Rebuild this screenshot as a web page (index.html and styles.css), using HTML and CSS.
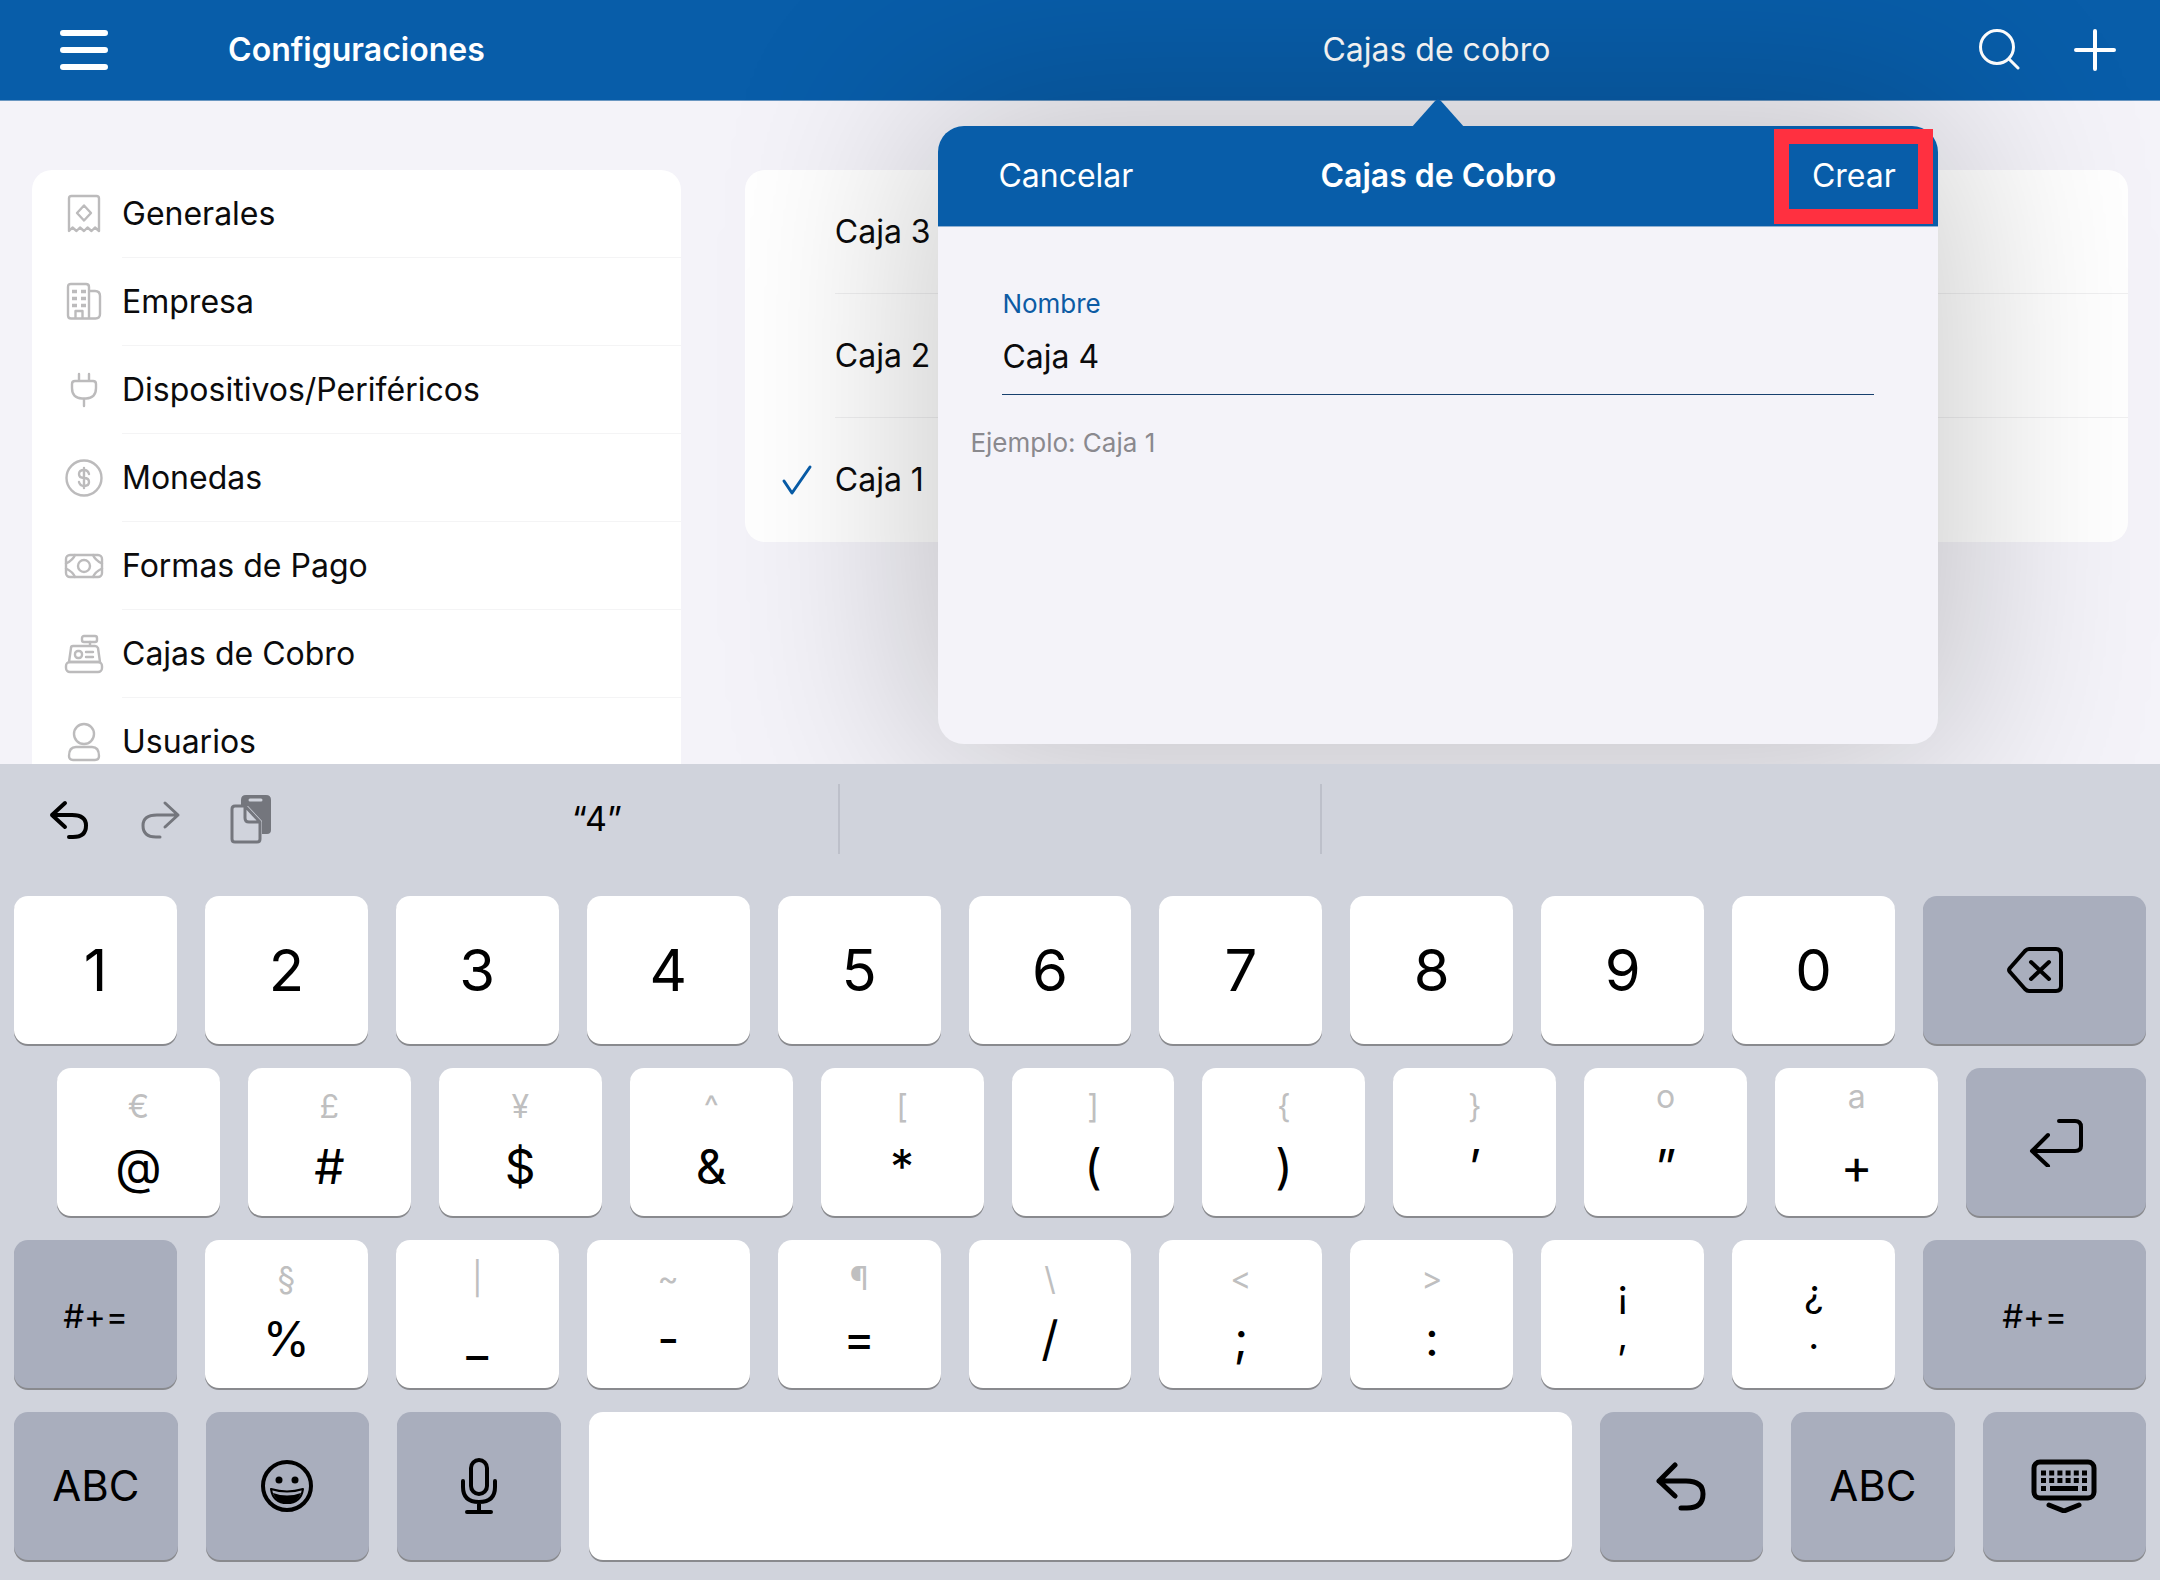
FILE: index.html
```html
<!DOCTYPE html>
<html lang="es">
<head>
<meta charset="utf-8">
<meta name="viewport" content="width=device-width, initial-scale=1">
<title>Configuraciones</title>
<link rel="stylesheet" href="styles.css">
</head>
<body>
<main class="app">
  <section class="sidebar">
    <header class="bar">
      <button class="bar-button menu-button" type="button" aria-label="Menú">
        <svg width="48" height="42" viewBox="0 0 48 42"><path d="M3 4h42M3 21h42M3 38h42" stroke-width="6"/></svg>
      </button>
      <h1 class="bar-title strong">Configuraciones</h1>
    </header>
    <nav class="pane">
      <ul class="card">
        <li><a class="nav-item" href="#generales">
          <svg class="nav-icon" viewBox="0 0 40 40"><path d="M5 37V4.500Q5 2 7.500 2h25Q35 2 35 4.500V37l-4-3.500-3.500 3.500-4-3.500-3.500 3.500-4-3.500-3.500 3.500-4-3.500zM20 11.500l7 7.500-7 7.500-7-7.500z"/></svg>
          <span>Generales</span></a></li>
        <li><a class="nav-item" href="#empresa">
          <svg class="nav-icon" viewBox="0 0 40 40"><path d="M7 2h15q3 0 3 3v31.500H7q-3 0-3-3V5q0-3 3-3zM25 9h6q5 0 5 5v18q0 4.500-4.500 4.500H25M11.500 36.500V29h7v7.500"/><path d="M8 9.500h5m4 0h5M8 16.500h5m4 0h5M8 23.500h5m4 0h5" stroke-width="3.500" stroke-linecap="butt"/></svg>
          <span>Empresa</span></a></li>
        <li><a class="nav-item" href="#dispositivos">
          <svg class="nav-icon" viewBox="0 0 40 40"><path d="M15 4v7M25 4v7M11 11h18q3 0 3 3v4q0 10-10 10.500h-4Q8 28 8 18v-4q0-3 3-3zM20 29v7"/></svg>
          <span>Dispositivos/Periféricos</span></a></li>
        <li><a class="nav-item" href="#monedas">
          <svg class="nav-icon" viewBox="0 0 40 40"><circle cx="20" cy="20" r="17.500"/><path d="M20 10v20M25 16q-1-4-5-4-5 0-5 4t5 4 5 4-5 4q-4 0-5-4"/></svg>
          <span>Monedas</span></a></li>
        <li><a class="nav-item" href="#pagos">
          <svg class="nav-icon" viewBox="0 0 40 40"><rect x="2" y="9" width="36" height="22" rx="4"/><circle cx="20" cy="20" r="6"/><path d="M11 9q-2 5-9 8.500M29 9q2 5 9 8.500M11 31q-2-5-9-8.500M29 31q2-5 9-8.500"/></svg>
          <span>Formas de Pago</span></a></li>
        <li><a class="nav-item" href="#cajas">
          <svg class="nav-icon" viewBox="0 0 40 40"><rect x="18" y="2" width="15" height="6" rx="2"/><path d="M26 8v4M9 12h22q2 0 3 2l2 14H5L7 14q0-2 2-2z"/><rect x="2" y="28" width="36" height="10" rx="4"/><rect x="11" y="17" width="7" height="7" rx="3"/><path d="M22 18h7M22 23h7"/></svg>
          <span>Cajas de Cobro</span></a></li>
        <li><a class="nav-item" href="#usuarios">
          <svg class="nav-icon" viewBox="0 0 40 40"><circle cx="20" cy="12" r="10"/><path d="M12 25h16q7 0 7 9 0 4-4 4H9q-4 0-4-4 0-9 7-9z"/></svg>
          <span>Usuarios</span></a></li>
      </ul>
    </nav>
  </section>

  <section class="detail">
    <header class="bar">
      <h2 class="bar-title">Cajas de cobro</h2>
      <div class="bar-actions">
        <button class="bar-button" type="button" aria-label="Buscar">
          <svg width="42" height="42" viewBox="0 0 42 42"><circle cx="19" cy="18" r="16.500" stroke-width="3"/><path d="M31 30l9 9" stroke-width="3"/></svg>
        </button>
        <button class="bar-button" type="button" aria-label="Añadir">
          <svg width="42" height="42" viewBox="0 0 42 42"><path class="plus" d="M21 2v38M2 21h38"/></svg>
        </button>
      </div>
    </header>
    <div class="pane">
      <ul class="card">
        <li><button class="box-item" type="button"><span class="mark"></span><span class="box-name">Caja 3</span></button></li>
        <li><button class="box-item" type="button"><span class="mark"></span><span class="box-name">Caja 2</span></button></li>
        <li><button class="box-item" type="button"><span class="mark"><svg width="32" height="32" viewBox="0 0 32 32"><path d="M3 17l8 12L29 3"/></svg></span><span class="box-name">Caja 1</span></button></li>
      </ul>
    </div>

    <form class="popover">
      <svg class="arrow" width="54" height="30" viewBox="0 0 54 30"><path d="M0 30L24 3q3-3 6 0L54 30z"/></svg>
      <div class="popover-bar">
        <button class="popover-button cancel" type="button">Cancelar</button>
        <h3 class="bar-title strong">Cajas de Cobro</h3>
        <button class="popover-button create" type="button">Crear</button>
      </div>
      <div class="popover-body">
        <label class="field-label" for="nombre">Nombre</label>
        <input class="field-input" id="nombre" type="text" value="Caja 4">
        <p class="hint">Ejemplo: Caja 1</p>
      </div>
    </form>
  </section>
</main>

<section class="keyboard" aria-label="Teclado">
  <div class="suggestions">
    <div class="edit-tools">
      <button class="tool" type="button" aria-label="Deshacer"><svg width="42" height="42" viewBox="0 0 42 42"><path d="M17 5L4 17l13 12M4 17h20q14 0 14 10.500 0 11.500-13 11.500h-4"/></svg></button>
      <button class="tool dim" type="button" aria-label="Rehacer"><svg width="42" height="42" viewBox="0 0 42 42"><path d="M26 5l13 12-13 12M39 17H18Q4 17 4 27.500q0 11.500 13 11.500h4"/></svg></button>
      <button class="tool dim" type="button" aria-label="Pegar"><svg width="42" height="50" viewBox="0 0 42 50"><path class="solid" d="M16 1h20q5 0 5 5v30q0 4-4 4h-5V27L18 12h-7V6q0-5 5-5z"/><path class="gap" d="M20 6h11"/><path d="M5 12h10l15 16v17q0 3-3 3H5q-3 0-3-3V15q0-3 3-3zM15 12v12q0 4 4 4h11"/></svg></button>
    </div>
    <button class="suggestion" type="button">“4”</button>
    <button class="suggestion" type="button" aria-label="Sugerencia"></button>
    <button class="suggestion" type="button" aria-label="Sugerencia"></button>
  </div>

  <div class="keys">
    <div class="row">
      <button class="key digit" type="button">1</button>
      <button class="key digit" type="button">2</button>
      <button class="key digit" type="button">3</button>
      <button class="key digit" type="button">4</button>
      <button class="key digit" type="button">5</button>
      <button class="key digit" type="button">6</button>
      <button class="key digit" type="button">7</button>
      <button class="key digit" type="button">8</button>
      <button class="key digit" type="button">9</button>
      <button class="key digit" type="button">0</button>
      <button class="key dark wide" type="button" aria-label="Borrar"><svg width="56" height="50" viewBox="0 0 56 50"><path d="M22 4h27q5 0 5 6v31q0 5-5 5H22q-2 0-4-2L3 27q-2-2 0-4L18 6q2-2 4-2z"/><path d="M24 17l18 17M42 17L24 34"/></svg></button>
    </div>
    <div class="row indented">
      <button class="key dual" type="button"><span class="alt">€</span><span class="main">@</span></button>
      <button class="key dual" type="button"><span class="alt">£</span><span class="main">#</span></button>
      <button class="key dual" type="button"><span class="alt">¥</span><span class="main">$</span></button>
      <button class="key dual" type="button"><span class="alt">^</span><span class="main">&amp;</span></button>
      <button class="key dual" type="button"><span class="alt">[</span><span class="main">*</span></button>
      <button class="key dual" type="button"><span class="alt">]</span><span class="main">(</span></button>
      <button class="key dual" type="button"><span class="alt">{</span><span class="main">)</span></button>
      <button class="key dual" type="button"><span class="alt">}</span><span class="main">’</span></button>
      <button class="key dual raised" type="button"><span class="alt">o</span><span class="main">”</span></button>
      <button class="key dual raised" type="button"><span class="alt">a</span><span class="main">+</span></button>
      <button class="key dark enter" type="button" aria-label="Intro"><svg width="54" height="50" viewBox="0 0 54 50"><path d="M30 4h16q6 0 6 6v19q0 5-6 5H3M19 18L3 34l16 15"/></svg></button>
    </div>
    <div class="row">
      <button class="key dark symbols" type="button">#+=</button>
      <button class="key dual" type="button"><span class="alt">§</span><span class="main">%</span></button>
      <button class="key dual" type="button"><span class="alt">|</span><span class="main">_</span></button>
      <button class="key dual" type="button"><span class="alt">~</span><span class="main">-</span></button>
      <button class="key dual" type="button"><span class="alt">¶</span><span class="main">=</span></button>
      <button class="key dual" type="button"><span class="alt">\</span><span class="main">/</span></button>
      <button class="key dual" type="button"><span class="alt">&lt;</span><span class="main">;</span></button>
      <button class="key dual" type="button"><span class="alt">&gt;</span><span class="main">:</span></button>
      <button class="key pair" type="button"><span>¡</span><span>,</span></button>
      <button class="key pair" type="button"><span>¿</span><span>.</span></button>
      <button class="key dark wide symbols" type="button">#+=</button>
    </div>
    <div class="row">
      <button class="key dark letters" type="button">ABC</button>
      <button class="key dark" type="button" aria-label="Emoji"><svg width="52" height="52" viewBox="0 0 52 52"><circle cx="26" cy="26" r="24"/><circle class="fill" cx="18" cy="20" r="3.500"/><circle class="fill" cx="34" cy="20" r="3.500"/><path d="M10 29q16 5 32 0-2 14-16 14T10 29z" stroke-width="2"/><path class="fill" d="M12 33q14 5 28 0-3 10-14 10T12 33z"/></svg></button>
      <button class="key dark" type="button" aria-label="Dictado"><svg width="38" height="56" viewBox="0 0 38 56"><rect x="11" y="2" width="16" height="34" rx="8"/><path d="M3 23v6q0 15 16 15t16-15v-6M19 44v10M7 54h24"/></svg></button>
      <button class="key space" type="button" aria-label="Espacio"></button>
      <button class="key dark" type="button" aria-label="Deshacer"><svg class="bold" width="50" height="50" viewBox="0 0 50 50"><path d="M19 4L3 20l16 15M3 20h27q17 0 17 13 0 14-16 14h-6"/></svg></button>
      <button class="key dark letters" type="button">ABC</button>
      <button class="key dark" type="button" aria-label="Ocultar teclado"><svg class="bold" width="66" height="54" viewBox="0 0 66 54"><rect x="3" y="3" width="60" height="36" rx="6"/><path class="dots" d="M10 14h46M10 21.500h46"/><path class="flat" d="M10 29.500h5M19 29.500h28M51 29.500h5"/><path d="M18 46l15 6 15-6"/></svg></button>
    </div>
  </div>
</section>
</body>
</html>
```
FILE: styles.css
```css
:root {
  --blue: #085da9;
  --pane: #f4f3f9;
  --icon: #bcbbbc;
  --key-dark: #a9aebd;
}

* {
  box-sizing: border-box;
}

body {
  margin: 0;
  min-height: 100vh;
  height: 100vh;
  display: flex;
  flex-direction: column;
  font-family: Inter, "Liberation Sans", sans-serif;
  font-size: 32px;
  line-height: 44px;
  color: #0b0b0c;
  background: var(--pane);
}

button,
input {
  font: inherit;
  color: inherit;
  border: 0;
  padding: 0;
  background: none;
}

h1,
h2,
h3,
p,
ul {
  margin: 0;
  padding: 0;
  font-size: inherit;
  font-weight: 400;
}

ul {
  list-style: none;
}

svg {
  display: block;
  flex: none;
  fill: none;
  stroke: currentColor;
  stroke-width: 3;
  stroke-linecap: round;
  stroke-linejoin: round;
}

/* Split view */
.app {
  flex: 1;
  min-height: 0;
  display: grid;
  grid-template-columns: 33fr 67fr;
  overflow: hidden;
  position: relative;
}

.sidebar,
.detail {
  min-width: 0;
  min-height: 0;
}

.detail {
  position: relative;
}

.bar {
  height: 101px;
  display: grid;
  grid-template-columns: 1fr auto 1fr;
  align-items: center;
  padding: 0 60px;
  color: #fff;
  background: var(--blue);
  border-bottom: 1px solid #6a97c2;
}

.detail .bar {
  padding: 0 44px;
}

.bar-title {
  grid-column: 2;
}

.strong {
  font-weight: 600;
}

.menu-button {
  justify-self: start;
}

.bar-actions {
  grid-column: 3;
  justify-self: end;
  display: flex;
  gap: 54px;
}

.plus {
  stroke-width: 4;
}

.pane {
  padding: 69px 32px 0;
}

.card {
  background: #fff;
  border-radius: 20px;
  overflow: hidden;
}

.nav-item {
  display: flex;
  align-items: center;
  gap: 18px;
  padding-left: 32px;
  color: inherit;
  text-decoration: none;
}

.nav-icon {
  width: 40px;
  height: 40px;
  color: var(--icon);
  stroke-width: 2.4;
}

.nav-item span {
  flex: 1;
  padding: 22px 0 21px;
  border-bottom: 1px solid #f4f4f5;
}

.box-item {
  display: flex;
  align-items: center;
  width: 100%;
  text-align: left;
}

.mark {
  width: 90px;
  display: flex;
  justify-content: center;
  padding-left: 14px;
  color: var(--blue);
}

.box-name {
  flex: 1;
  padding: 40px 0 39px;
  border-bottom: 1px solid #f0f0f1;
}

li:last-child .box-name {
  border-bottom-color: transparent;
}

/* Popover */
.popover {
  position: absolute;
  top: 126px;
  bottom: 20px;
  left: 50%;
  width: 1000px;
  margin-left: -498px;
  border-radius: 26px;
  background: var(--pane);
  box-shadow: 0 0 200px 20px rgba(0, 0, 0, 0.21);
}

.arrow {
  position: absolute;
  top: -28px;
  left: 50%;
  margin-left: -27px;
  stroke: none;
  fill: var(--blue);
}

.popover-bar {
  height: 101px;
  display: grid;
  grid-template-columns: 1fr auto 1fr;
  align-items: center;
  color: #fff;
  background: var(--blue);
  border-bottom: 1px solid #8fb0d2;
  border-radius: 26px 26px 0 0;
}

.cancel {
  justify-self: start;
  margin-left: 60px;
}

.create {
  justify-self: end;
  grid-column: 3;
  width: 159px;
  height: 95px;
  margin-right: 5px;
  border: 15px solid #ff3040;
}

.popover-body {
  display: flex;
  flex-direction: column;
  padding: 59px 64px 0;
}

.field-label,
.hint {
  font-size: 26px;
  line-height: 36px;
}

.field-label {
  color: #0d5ba4;
}

.field-input {
  width: 100%;
  height: 73px;
  padding: 0 0 4px;
  border-bottom: 1px solid #17406e;
  outline: 0;
}

.hint {
  margin-top: 30px;
  margin-left: -32px;
  color: #8a898e;
}

/* Keyboard */
.keyboard {
  position: relative;
  background: #d0d3dc;
  color: #000;
}

.suggestions {
  height: 132px;
  padding-bottom: 22px;
  display: grid;
  grid-template-columns: 356fr 482fr 482fr 840fr;
  align-items: center;
}

.edit-tools {
  display: flex;
  align-items: center;
  gap: 49px;
  padding-left: 48px;
}

.tool svg {
  stroke-width: 4;
}

.tool.dim {
  color: #74767d;
}

.tool.dim svg {
  stroke-width: 3;
}

.tool .solid {
  fill: currentColor;
  stroke: none;
}

.tool .gap {
  stroke: #d0d3dc;
}

.suggestion {
  height: 70px;
  font-size: 34px;
}

.suggestion + .suggestion {
  border-left: 2px solid #bdc0ca;
}

.keys {
  display: flex;
  flex-direction: column;
  gap: 24px;
  padding: 0 14px 20px;
}

.row {
  display: flex;
  gap: 28px;
}

.indented {
  padding-left: 43px;
}

.key {
  flex: 163 1 0;
  min-width: 0;
  height: 148px;
  display: flex;
  align-items: center;
  justify-content: center;
  border-radius: 14px;
  background: #fff;
  box-shadow: 0 2px 0 #898a8e;
}

.key.dark {
  background: var(--key-dark);
}

.key.wide {
  flex-grow: 223;
}

.key.enter {
  flex-grow: 180;
}

.key.space {
  flex-grow: 980;
}

.key svg {
  stroke-width: 4;
}

.key svg.bold {
  stroke-width: 5;
}

.key .fill {
  fill: currentColor;
  stroke: none;
}

.key .dots {
  stroke-width: 5;
  stroke-linecap: butt;
  stroke-dasharray: 5 3.2;
}

.key .flat {
  stroke-linecap: butt;
}

.digit {
  font-size: 58px;
}

.letters {
  font-size: 42px;
}

.key.symbols {
  font-size: 33px;
  padding-top: 4px;
}

.dual {
  flex-direction: column;
  justify-content: flex-start;
  padding-top: 17px;
}

.alt {
  font-size: 32px;
  line-height: 44px;
  color: #bfbfc0;
}

.main {
  font-size: 48px;
  line-height: 76px;
}

.raised .alt {
  line-height: 24px;
  margin-bottom: 20px;
}

.pair {
  flex-direction: column;
  font-size: 38px;
  line-height: 42px;
}
```
